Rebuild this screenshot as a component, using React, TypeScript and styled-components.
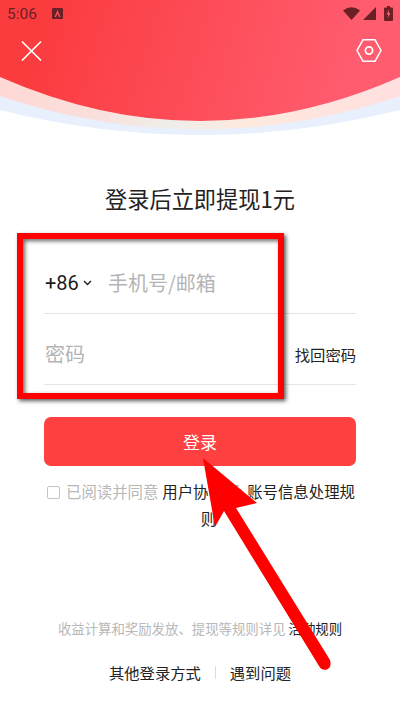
import React from 'react'
import styled, { createGlobalStyle } from 'styled-components'

const GlobalStyle = createGlobalStyle`
    html, body {
        margin: 0;
        padding: 0;
        background: #fff;
    }
    body {
        font-family: "Noto Sans CJK SC", "Liberation Sans", sans-serif;
    }
`

const Page = styled.div`
    position: relative;
    width: 400px;
    height: 710px;
    overflow: hidden;
    background: #fff;
    display: flex;
    flex-direction: column;
    align-items: center;
`

const Hero = styled.header`
    position: relative;
    width: 100%;
    height: 140px;
    flex-shrink: 0;
`

const HeroCurve = styled.svg`
    position: absolute;
    inset: 0;
    width: 400px;
    height: 140px;
`

const StatusBar = styled.div`
    position: relative;
    height: 27px;
    padding: 0 7px;
    display: flex;
    align-items: center;
    color: #6a2024;
`

const Clock = styled.span`
    font-family: "Roboto", "Liberation Sans", sans-serif;
    font-size: 15.5px;
    width: 45px;
`

const StatusIcons = styled.div`
    margin-left: auto;
    display: flex;
    align-items: center;
    gap: 3px;
`

const Battery = styled.svg`
    margin-left: 5px;
`

const NavBar = styled.nav`
    position: relative;
    padding: 10px 18px 0 20px;
    display: flex;
    justify-content: space-between;
    align-items: flex-start;
`

const Title = styled.h1`
    margin: 43px 0 0;
    font-size: 22.2px;
    line-height: 30px;
    font-weight: 400;
    color: #222;
`

const Form = styled.form`
    width: 312px;
    margin-top: 30px;
    display: flex;
    flex-direction: column;
`

const Field = styled.div`
    height: 71px;
    padding: 0 0 16px 1px;
    display: flex;
    align-items: flex-end;
    border-bottom: 1px solid #e6e6e6;
    box-sizing: border-box;
    line-height: 28px;
`

const Prefix = styled.span`
    width: 63px;
    display: flex;
    align-items: center;
    gap: 4px;
    font-family: "Roboto", "Liberation Sans", sans-serif;
    font-size: 20px;
    color: #1c1c1c;
`

const Placeholder = styled.span`
    flex: 1;
    font-size: 20px;
    color: #b4b4b4;
`

const ForgotLink = styled.a`
    font-size: 15.3px;
    color: #222;
`

const SubmitButton = styled.button`
    height: 49px;
    margin-top: 32px;
    border: none;
    border-radius: 7px;
    background: #ff4040;
    color: #fff;
    font: inherit;
    font-size: 17px;
`

const Agreement = styled.div`
    width: 309px;
    margin: 12px 0 0 3px;
    display: flex;
    align-items: flex-start;
    gap: 6px;
`

const AgreementText = styled.p`
    width: 285px;
    margin: 0;
    font-size: 15.4px;
    line-height: 27px;
    word-spacing: 0.5px;
    text-align: center;
    color: #222;
    white-space: nowrap;
`

const CheckBox = styled.span`
    flex-shrink: 0;
    width: 11px;
    height: 11px;
    margin-top: 8px;
    border: 1px solid #c4c4c4;
    border-radius: 2px;
`

const Muted = styled.span`
    color: #b8b8b8;
`

const Footer = styled.footer`
    margin-top: auto;
    padding-bottom: 27px;
    display: flex;
    flex-direction: column;
    align-items: center;
`

const RuleNote = styled.p`
    margin: 0;
    font-size: 13.4px;
    line-height: 20px;
    color: #222;
    white-space: nowrap;
`

const FooterLinks = styled.div`
    margin-top: 23px;
    display: flex;
    align-items: center;
    font-size: 15.3px;
    line-height: 22px;
    color: #222;
`

const Divider = styled.span`
    width: 1px;
    height: 13px;
    margin: 0 14px;
    background: #ddd;
`

const MarkerBox = styled.div`
    position: absolute;
    left: 17px;
    top: 233px;
    width: 255px;
    height: 154px;
    border: 6.5px solid #fe0000;
    box-shadow: 2px 2px 4px rgba(0, 0, 0, 0.65), inset 2px 2px 4px rgba(0, 0, 0, 0.6);
`

const MarkerArrow = styled.svg`
    position: absolute;
    left: 0;
    top: 0;
    width: 400px;
    height: 710px;
    pointer-events: none;
`

function Login() {
    return (
        <Page>
            <GlobalStyle />
            <Hero>
                <HeroCurve viewBox="0 0 400 140">
                    <defs>
                        <linearGradient id="redFill" x1="0" y1="0" x2="400" y2="120" gradientUnits="userSpaceOnUse">
                            <stop offset="0.12" stopColor="#fb3c3f" />
                            <stop offset="0.85" stopColor="#ff5c6f" />
                        </linearGradient>
                        <linearGradient id="paleBand" x1="0" y1="0" x2="400" y2="0" gradientUnits="userSpaceOnUse">
                            <stop offset="0" stopColor="#ffd8d4" />
                            <stop offset="0.25" stopColor="#f9e0dc" />
                            <stop offset="0.42" stopColor="#efeeea" />
                            <stop offset="0.62" stopColor="#fde9dd" />
                            <stop offset="1" stopColor="#ffdfdf" />
                        </linearGradient>
                    </defs>
                    <path d="M0 110 Q200 160 400 110 L400 0 L0 0 Z" fill="#e8f0fd" />
                    <path d="M0 96 Q200 163 400 96 L400 0 L0 0 Z" fill="url(#paleBand)" />
                    <path d="M0 77 Q200 165 400 77 L400 0 L0 0 Z" fill="url(#redFill)" />
                </HeroCurve>
                <StatusBar>
                    <Clock>5:06</Clock>
                    <svg width="11" height="11" viewBox="0 0 11 11">
                        <rect width="11" height="11" rx="1" fill="#6a2024" />
                        <path d="M2.5 9 L5.5 2 L8.5 9 L7 9 L5.5 5.5 L4 9 Z" fill="#f2545a" />
                    </svg>
                    <StatusIcons>
                        <svg width="17" height="13" viewBox="0 0 17 13">
                            <path d="M0 3.5 Q8.5 -3 17 3.5 L8.5 13 Z" fill="#6a2024" />
                        </svg>
                        <svg width="13" height="13" viewBox="0 0 13 13">
                            <path d="M13 0 L13 13 L0 13 Z" fill="#6a2024" />
                        </svg>
                        <Battery width="9" height="15" viewBox="0 0 9 15">
                            <path d="M3 0 H6 V1.5 H8 Q9 1.5 9 2.5 V14 Q9 15 8 15 H1 Q0 15 0 14 V2.5 Q0 1.5 1 1.5 H3 Z" fill="#6a2024" />
                            <path d="M5.2 3.5 L2.5 8.6 H4.2 L3.8 12 L6.5 7 H4.8 Z" fill="#f8626f" />
                        </Battery>
                    </StatusIcons>
                </StatusBar>
                <NavBar>
                    <svg width="24" height="26" viewBox="0 0 24 26" fill="none" stroke="#fff" strokeWidth="1.7">
                        <path d="M2 4.5 L21 23.5 M21 4.5 L2 23.5" />
                    </svg>
                    <svg width="26" height="26" viewBox="0 0 26 26" fill="none" stroke="#fff" strokeWidth="1.5">
                        <path d="M7 2.8 H19 L25 13.5 L19 24.2 H7 L1 13.5 Z" />
                        <circle cx="13" cy="13.5" r="3.6" strokeWidth="1.8" />
                    </svg>
                </NavBar>
            </Hero>

            <Title>登录后立即提现1元</Title>

            <Form>
                <Field>
                    <Prefix>
                        +86
                        <svg width="9" height="6" viewBox="0 0 9 6" fill="none" stroke="#222" strokeWidth="1.4">
                            <path d="M1 1 L4.5 4.5 L8 1" />
                        </svg>
                    </Prefix>
                    <Placeholder>手机号/邮箱</Placeholder>
                </Field>
                <Field>
                    <Placeholder>密码</Placeholder>
                    <ForgotLink>找回密码</ForgotLink>
                </Field>
                <SubmitButton type="button">登录</SubmitButton>
            </Form>

            <Agreement>
                <CheckBox />
                <AgreementText>
                    <Muted>已阅读并同意</Muted> 用户协议 <Muted>及</Muted> 账号信息处理规<br />则
                </AgreementText>
            </Agreement>

            <Footer>
                <RuleNote>
                    <Muted>收益计算和奖励发放、提现等规则详见</Muted> 活动规则
                </RuleNote>
                <FooterLinks>
                    其他登录方式
                    <Divider />
                    遇到问题
                </FooterLinks>
            </Footer>

            <MarkerBox />
            <MarkerArrow viewBox="0 0 400 710">
                <path d="M203 458 L257 503 L236 508 L330 660 Q332 667 327 669.5 Q322 671 319 666 L224 511 L215 527 Z" fill="#fe0000" />
            </MarkerArrow>
        </Page>
    )
}

export default Login
